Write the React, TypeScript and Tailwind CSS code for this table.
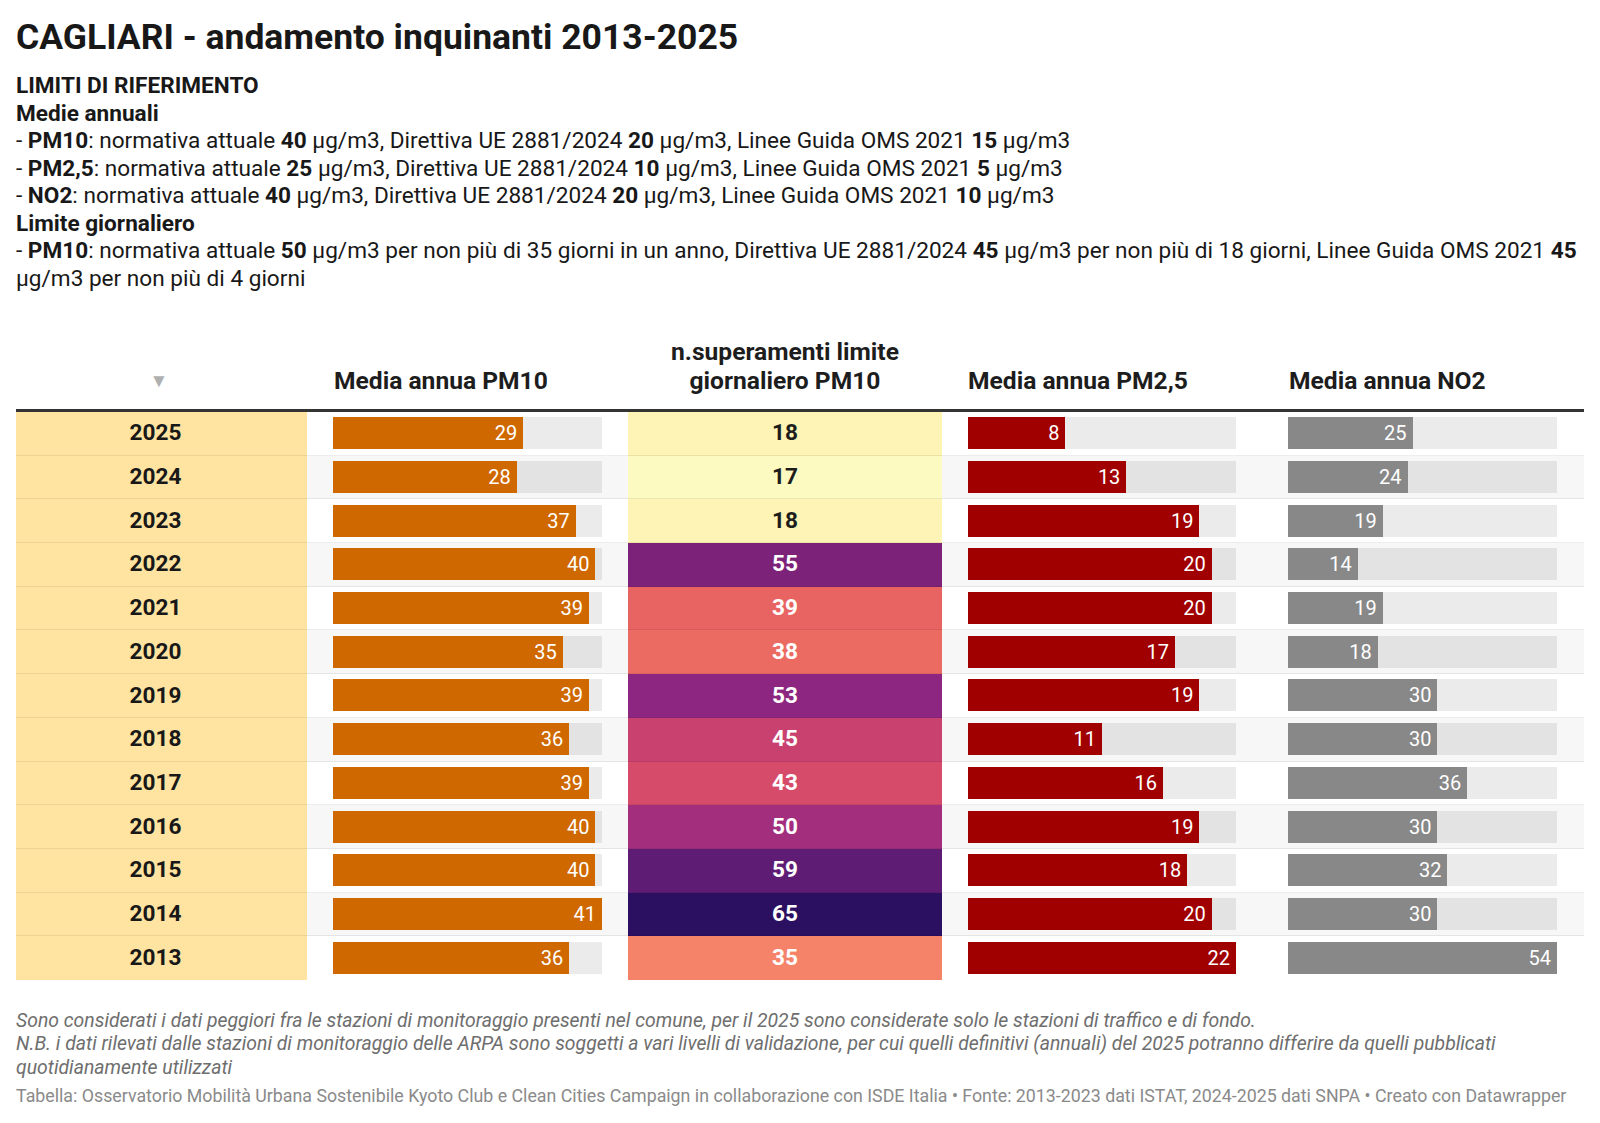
import React from 'react';

type Row = {
  year: number;
  pm10: number;
  days: number;
  pm25: number;
  no2: number;
};

const rows: Row[] = [
  { year: 2025, pm10: 29, days: 18, pm25: 8, no2: 25 },
  { year: 2024, pm10: 28, days: 17, pm25: 13, no2: 24 },
  { year: 2023, pm10: 37, days: 18, pm25: 19, no2: 19 },
  { year: 2022, pm10: 40, days: 55, pm25: 20, no2: 14 },
  { year: 2021, pm10: 39, days: 39, pm25: 20, no2: 19 },
  { year: 2020, pm10: 35, days: 38, pm25: 17, no2: 18 },
  { year: 2019, pm10: 39, days: 53, pm25: 19, no2: 30 },
  { year: 2018, pm10: 36, days: 45, pm25: 11, no2: 30 },
  { year: 2017, pm10: 39, days: 43, pm25: 16, no2: 36 },
  { year: 2016, pm10: 40, days: 50, pm25: 19, no2: 30 },
  { year: 2015, pm10: 40, days: 59, pm25: 18, no2: 32 },
  { year: 2014, pm10: 41, days: 65, pm25: 20, no2: 30 },
  { year: 2013, pm10: 36, days: 35, pm25: 22, no2: 54 },
];

// heatmap colours for the "superamenti" column, by value
const dayColors: Record<number, { bg: string; light: boolean }> = {
  18: { bg: 'bg-[#fdf4b5]', light: false },
  17: { bg: 'bg-[#fcfac0]', light: false },
  55: { bg: 'bg-[#7d2279]', light: true },
  39: { bg: 'bg-[#e86462]', light: true },
  38: { bg: 'bg-[#eb6b63]', light: true },
  53: { bg: 'bg-[#8c2680]', light: true },
  45: { bg: 'bg-[#c9416f]', light: true },
  43: { bg: 'bg-[#d64b69]', light: true },
  50: { bg: 'bg-[#a22e7d]', light: true },
  59: { bg: 'bg-[#5e1c75]', light: true },
  65: { bg: 'bg-[#2b1061]', light: true },
  35: { bg: 'bg-[#f5836a]', light: true },
};

function Bar({ value, max, color }: { value: number; max: number; color: string }) {
  return (
    <div className="h-[32px] w-full bg-black/[0.08]">
      <div
        className={`h-full ${color} flex items-center justify-end pr-[6px] text-[20px] text-white leading-none`}
        style={{ width: `${(value / max) * 100}%` }}
      >
        {value}
      </div>
    </div>
  );
}

export default function App() {
  const font = { fontFamily: 'Roboto, "Noto Sans", sans-serif' };

  return (
    <div className="min-h-screen bg-white px-4 pt-[17px] text-[#181818]" style={font}>
      <h1 className="text-[35.5px] font-bold leading-[40px]">
        CAGLIARI - andamento inquinanti 2013-2025
      </h1>

      <div className="mt-[15px] text-[22.6px] leading-[27.5px]">
        <p className="font-bold">LIMITI DI RIFERIMENTO</p>
        <p className="font-bold">Medie annuali</p>
        <p>
          - <b>PM10</b>: normativa attuale <b>40</b> µg/m3, Direttiva UE 2881/2024 <b>20</b> µg/m3, Linee Guida OMS 2021 <b>15</b> µg/m3
        </p>
        <p>
          - <b>PM2,5</b>: normativa attuale <b>25</b> µg/m3, Direttiva UE 2881/2024 <b>10</b> µg/m3, Linee Guida OMS 2021 <b>5</b> µg/m3
        </p>
        <p>
          - <b>NO2</b>: normativa attuale <b>40</b> µg/m3, Direttiva UE 2881/2024 <b>20</b> µg/m3, Linee Guida OMS 2021 <b>10</b> µg/m3
        </p>
        <p className="font-bold">Limite giornaliero</p>
        <p>
          - <b>PM10</b>: normativa attuale <b>50</b> µg/m3 per non più di 35 giorni in un anno, Direttiva UE 2881/2024 <b>45</b> µg/m3 per non più di 18 giorni, Linee Guida OMS 2021 <b>45</b>{' '}
          µg/m3 per non più di 4 giorni
        </p>
      </div>

      {/* table */}
      <div className="mt-[45px]">
        <div className="grid grid-cols-[291px_321px_314px_320px_322px] items-end border-b-[3px] border-[#333333] pb-[14px] text-[24.6px] font-bold leading-[29px] text-[#1d1d1d]">
          <div className="flex justify-center pr-[5px] text-[19px] font-normal text-[#b0b0b0]">▼</div>
          <div className="pl-[27px]">Media annua PM10</div>
          <div className="text-center">
            n.superamenti limite
            <br />
            giornaliero PM10
          </div>
          <div className="pl-[26px]">Media annua PM2,5</div>
          <div className="pl-[27px]">Media annua NO2</div>
        </div>

        {rows.map((r, i) => {
          const c = dayColors[r.days];
          const last = i === rows.length - 1;
          const line = last ? '' : 'border-b border-black/[0.07]';
          return (
            <div
              key={r.year}
              className={`grid h-[43.7px] grid-cols-[291px_321px_314px_320px_322px] ${i % 2 === 1 ? 'bg-[#f7f7f7]' : 'bg-white'}`}
            >
              <div className={`flex items-center justify-center bg-[#fee4a0] pr-[12px] text-[22.6px] font-bold ${line}`}>
                {r.year}
              </div>
              <div className={`flex items-center pl-[26px] pr-[26px] ${line}`}>
                <Bar value={r.pm10} max={41} color="bg-[#d06800]" />
              </div>
              <div
                className={`flex items-center justify-center text-[22.6px] font-bold ${c.bg} ${c.light ? 'text-white' : 'text-[#1d1d1d]'} ${line}`}
              >
                {r.days}
              </div>
              <div className={`flex items-center pl-[26px] pr-[26px] ${line}`}>
                <Bar value={r.pm25} max={22} color="bg-[#a00000]" />
              </div>
              <div className={`flex items-center pl-[26px] pr-[27px] ${line}`}>
                <Bar value={r.no2} max={54} color="bg-[#888888]" />
              </div>
            </div>
          );
        })}
      </div>

      <div className="mt-[29px] text-[19.4px] italic leading-[23.5px] text-[#6e6e6e]">
        <p>
          Sono considerati i dati peggiori fra le stazioni di monitoraggio presenti nel comune, per il 2025 sono considerate solo le stazioni di traffico e di fondo.
        </p>
        <p>
          N.B. i dati rilevati dalle stazioni di monitoraggio delle ARPA sono soggetti a vari livelli di validazione, per cui quelli definitivi (annuali) del 2025 potranno differire da quelli pubblicati{' '}
          quotidianamente utilizzati
        </p>
      </div>
      <p className="mt-[5px] pb-4 text-[17.8px] leading-[23px] text-[#8a8a8a]">
        Tabella: Osservatorio Mobilità Urbana Sostenibile Kyoto Club e Clean Cities Campaign in collaborazione con ISDE Italia • Fonte: 2013-2023 dati ISTAT, 2024-2025 dati SNPA • Creato con Datawrapper
      </p>
    </div>
  );
}
